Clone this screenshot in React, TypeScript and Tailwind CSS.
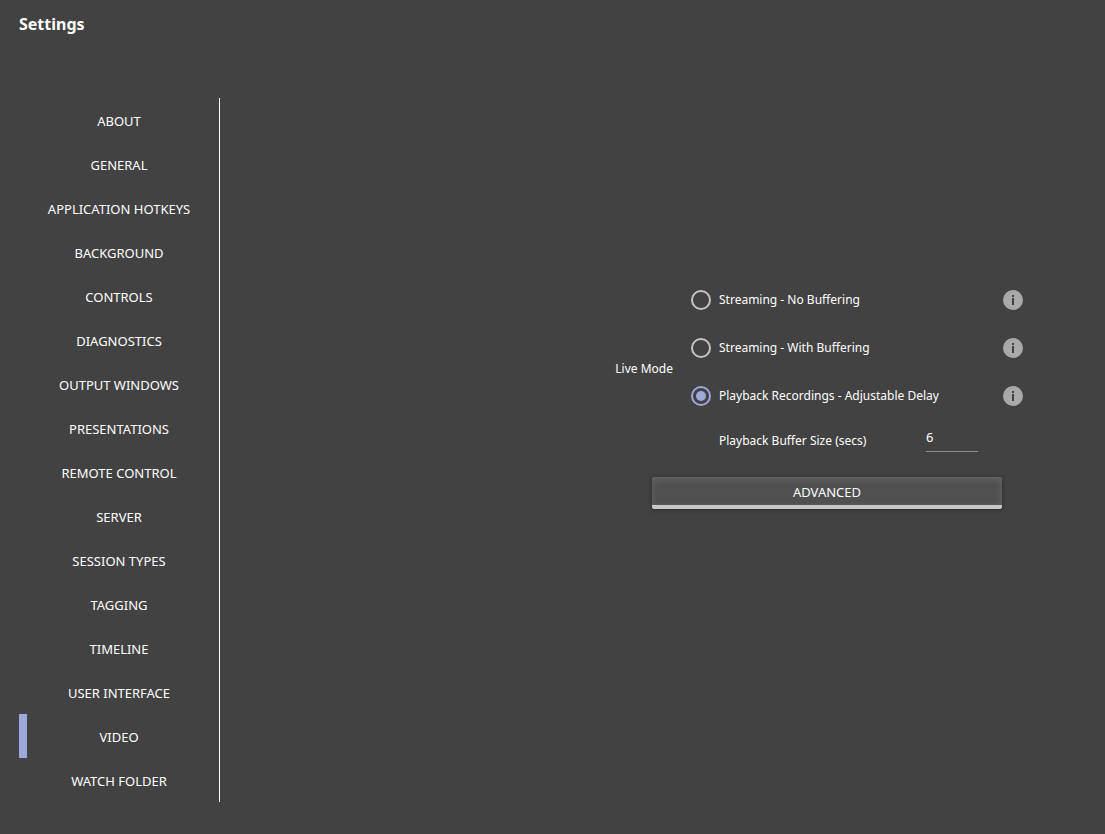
import React, { useState } from 'react';

const SECTIONS = [
  'About',
  'General',
  'Application Hotkeys',
  'Background',
  'Controls',
  'Diagnostics',
  'Output Windows',
  'Presentations',
  'Remote Control',
  'Server',
  'Session Types',
  'Tagging',
  'Timeline',
  'User Interface',
  'Video',
  'Watch Folder',
];

const LIVE_MODES = [
  { id: 'no-buffering', label: 'Streaming - No Buffering' },
  { id: 'with-buffering', label: 'Streaming - With Buffering' },
  { id: 'playback', label: 'Playback Recordings - Adjustable Delay' },
];

const InfoIcon: React.FC = () => (
  <svg width="20" height="20" viewBox="0 0 20 20" aria-hidden="true">
    <circle cx="10" cy="10" r="10" fill="#a9a9a9" />
    <rect x="9" y="5" width="2" height="2" fill="#424242" />
    <rect x="9" y="8" width="2" height="7" fill="#424242" />
  </svg>
);

interface SidebarProps {
  active: string;
  onSelect: (section: string) => void;
}

const Sidebar: React.FC<SidebarProps> = ({ active, onSelect }) => (
  <nav className="flex flex-col w-[201px] shrink-0 border-r border-white">
    {SECTIONS.map((section) => (
      <button
        key={section}
        type="button"
        onClick={() => onSelect(section)}
        className={`h-11 px-2 pt-0.5 border-l-8 flex items-center justify-center uppercase ${
          active === section ? 'border-[#9fa8da]' : 'border-transparent'
        }`}
      >
        <span className="pr-2 whitespace-nowrap">{section}</span>
      </button>
    ))}
  </nav>
);

const VideoSettings: React.FC = () => {
  const [mode, setMode] = useState('playback');
  const [bufferSize, setBufferSize] = useState('6');

  return (
    <div className="flex flex-col gap-[15px]">
      <div role="radiogroup" aria-labelledby="live-mode" className="flex items-center gap-[18px] text-[12px]">
        <span id="live-mode" className="whitespace-nowrap">Live Mode</span>

        <div className="w-[332px]">
          {LIVE_MODES.map(({ id, label }) => (
            <div key={id} className="flex items-center justify-between h-12">
              <label htmlFor={id} className="flex items-center gap-2">
                <input
                  id={id}
                  type="radio"
                  name="live-mode"
                  checked={mode === id}
                  onChange={() => setMode(id)}
                  className="appearance-none size-5 rounded-full border-2 border-[#c4c4c4] grid place-items-center checked:border-[#9fa8da] before:size-[10px] before:rounded-full checked:before:bg-[#9fa8da]"
                />
                {label}
              </label>
              <button type="button" aria-label={`About ${label}`}>
                <InfoIcon />
              </button>
            </div>
          ))}

          {/* Buffer size */}
          <div className="flex items-center justify-between h-[42px] pl-7 pr-[45px]">
            <label htmlFor="buffer-size">Playback Buffer Size (secs)</label>
            <input
              id="buffer-size"
              type="text"
              value={bufferSize}
              onChange={(e) => setBufferSize(e.target.value)}
              className="w-[52px] h-[26px] pb-1 mb-1 text-[13px] border-b border-[#8a8a8a] bg-transparent outline-none"
            />
          </div>
        </div>
      </div>

      <button
        type="button"
        className="self-end w-[350px] h-8 mr-[21px] pt-0.5 rounded-xs bg-[#505050] border-b-4 border-[#cac7ca] uppercase shadow-[0_1px_4px_rgba(0,0,0,0.4),inset_0_2px_6px_rgba(255,255,255,0.15)]"
      >
        Advanced
      </button>
    </div>
  );
};

const App: React.FC = () => {
  const [section, setSection] = useState('Video');

  return (
    <div className="flex flex-col min-h-screen px-[19px] pb-8 bg-[#424242] text-white font-['Noto_Sans',sans-serif] text-[13px] leading-5">
      <header className="h-[98px] pt-3">
        <h1 className="text-base leading-6 font-bold">Settings</h1>
      </header>

      <div className="flex flex-1 items-start">
        <Sidebar active={section} onSelect={setSection} />
        <main className="flex flex-1 justify-end pt-[178px] pr-[63px]">
          <VideoSettings />
        </main>
      </div>
    </div>
  );
};

export default App;
